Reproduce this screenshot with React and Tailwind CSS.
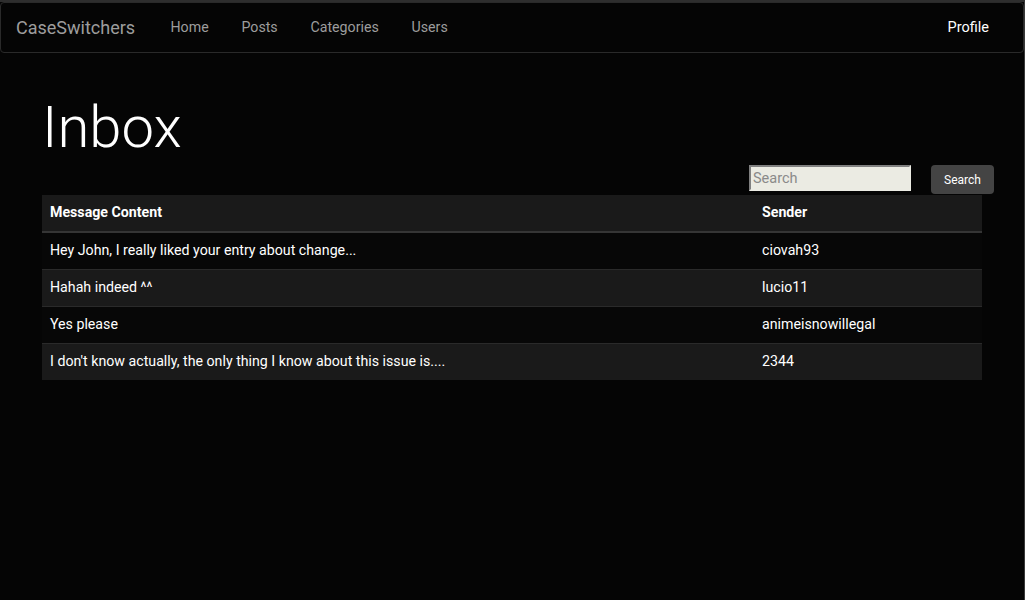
import React from 'react';

const messages = [
  { content: 'Hey John, I really liked your entry about change...', sender: 'ciovah93' },
  { content: 'Hahah indeed ^^', sender: 'lucio11' },
  { content: 'Yes please', sender: 'animeisnowillegal' },
  { content: "I don't know actually, the only thing I know about this issue is....", sender: '2344' },
];

const navLinks = ['Home', 'Posts', 'Categories', 'Users'];

const App = () => {
  return (
    <div
      className="min-h-[600px] bg-[#050505] border-t-2 border-t-[#2e2e2e] border-r border-r-[#3a3a3a] text-white"
      style={{ fontFamily: 'Roboto, "Liberation Sans", sans-serif' }}
    >
      <nav className="h-[51px] flex items-center border border-[#2a2a2a] rounded-[4px] bg-[#050505]">
        <a className="ml-[15px] text-[18px] text-[#9d9d9d]">CaseSwitchers</a>
        <ul className="flex ml-[19px] text-[14.2px] text-[#9d9d9d]">
          {navLinks.map((link) => (
            <li key={link} className="px-[16.4px]">
              {link}
            </li>
          ))}
        </ul>
        <a className="ml-auto mr-[34px] text-[14.5px] text-white">Profile</a>
      </nav>

      <div className="px-[42px]">
        <h1 className="mt-[38px] text-[58px] leading-[72px] font-light">Inbox</h1>

        <div className="flex justify-end items-start mt-[2px] mr-[-12px] gap-[20px]">
          <input
            type="text"
            placeholder="Search"
            className="w-[162px] h-[26px] px-[2px] bg-[#ebebe3] text-black text-[14.5px] placeholder:text-[#8a8a8a] border-2 border-t-[#808080] border-l-[#808080] border-b-[#ebebe3] border-r-[#ebebe3] outline-none"
          />
          <button className="w-[63px] h-[29px] bg-[#444444] rounded-[4px] text-[12px] text-white">
            Search
          </button>
        </div>

        <table className="w-full mt-[1px] text-[14.2px] border-collapse">
          <thead>
            <tr className="bg-[#1a1a1a] border-b-2 border-b-[#353535]">
              <th className="w-[712px] h-[37px] px-[8px] text-left font-bold">Message Content</th>
              <th className="px-[8px] text-left font-bold">Sender</th>
            </tr>
          </thead>
          <tbody>
            {messages.map((m, i) => (
              <tr
                key={m.sender}
                className={`border-t border-[#2a2a2a] ${i % 2 === 0 ? 'bg-[#070707]' : 'bg-[#1a1a1a]'}`}
              >
                <td className="h-[37px] px-[8px]">{m.content}</td>
                <td className="px-[8px]">{m.sender}</td>
              </tr>
            ))}
          </tbody>
        </table>
      </div>
    </div>
  );
};

export default App;
